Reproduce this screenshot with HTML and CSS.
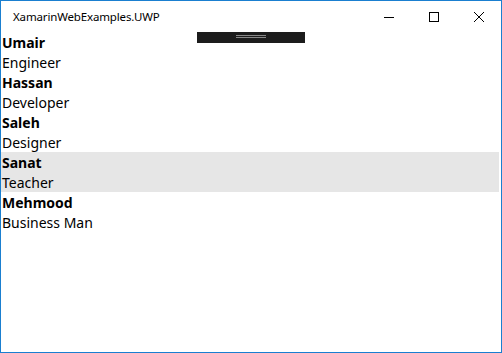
FILE: index.html
```html
<!DOCTYPE html>
<html>
<head>
<meta charset="utf-8">
<link rel="stylesheet" href="styles.css">
</head>
<body>
<div class="window">
  <div class="titlebar">
    <span class="title">XamarinWebExamples.UWP</span>
    <div class="controls">
      <span class="ctl"><svg width="12" height="12" viewBox="0 0 12 12"><line x1="1" y1="6.5" x2="11" y2="6.5" stroke="#000" stroke-width="1"/></svg></span>
      <span class="ctl"><svg width="12" height="12" viewBox="0 0 12 12"><rect x="1.5" y="1.5" width="9" height="9" fill="none" stroke="#000" stroke-width="1"/></svg></span>
      <span class="ctl"><svg width="12" height="12" viewBox="0 0 12 12"><path d="M1 1 L11 11 M11 1 L1 11" stroke="#000" stroke-width="1"/></svg></span>
    </div>
  </div>
  <div class="content">
    <div class="debugbar"><span class="grip"></span></div>
    <ul class="list">
      <li class="item"><div class="name">Umair</div><div class="job">Engineer</div></li>
      <li class="item"><div class="name">Hassan</div><div class="job">Developer</div></li>
      <li class="item"><div class="name">Saleh</div><div class="job">Designer</div></li>
      <li class="item selected"><div class="name">Sanat</div><div class="job">Teacher</div></li>
      <li class="item"><div class="name">Mehmood</div><div class="job">Business Man</div></li>
    </ul>
  </div>
</div>
</body>
</html>
```
FILE: styles.css
```css
html, body {
  margin: 0;
  padding: 0;
  background: #fff;
}
.window {
  width: 502px;
  height: 353px;
  box-sizing: border-box;
  border: 1px solid #1a7fd0;
  display: flex;
  flex-direction: column;
  font-family: "Noto Sans", "Open Sans", sans-serif;
  color: #000;
}
.titlebar {
  height: 31px;
  display: flex;
  align-items: center;
  justify-content: space-between;
  flex-shrink: 0;
}
.title {
  font-size: 11.5px;
  padding-left: 12px;
  letter-spacing: -0.15px;
}
.controls {
  display: flex;
  height: 31px;
}
.ctl {
  width: 45px;
  height: 31px;
  display: flex;
  align-items: center;
  justify-content: center;
}
.content {
  position: relative;
  flex: 1;
}
.debugbar {
  position: absolute;
  left: 196px;
  top: 0;
  width: 108px;
  height: 11px;
  background: #1c1c1c;
}
.grip {
  position: absolute;
  left: 39px;
  top: 3px;
  width: 30px;
  height: 1px;
  border-top: 1px solid #888;
  border-bottom: 1px solid #888;
}
.list {
  list-style: none;
  margin: 0;
  padding: 0 2px 0 0;
}
.item {
  padding-left: 1px;
}
.item.selected {
  background: #e6e6e6;
}
.name, .job {
  height: 20px;
  line-height: 21px;
  font-size: 14px;
}
.name {
  font-weight: 700;
}
```
